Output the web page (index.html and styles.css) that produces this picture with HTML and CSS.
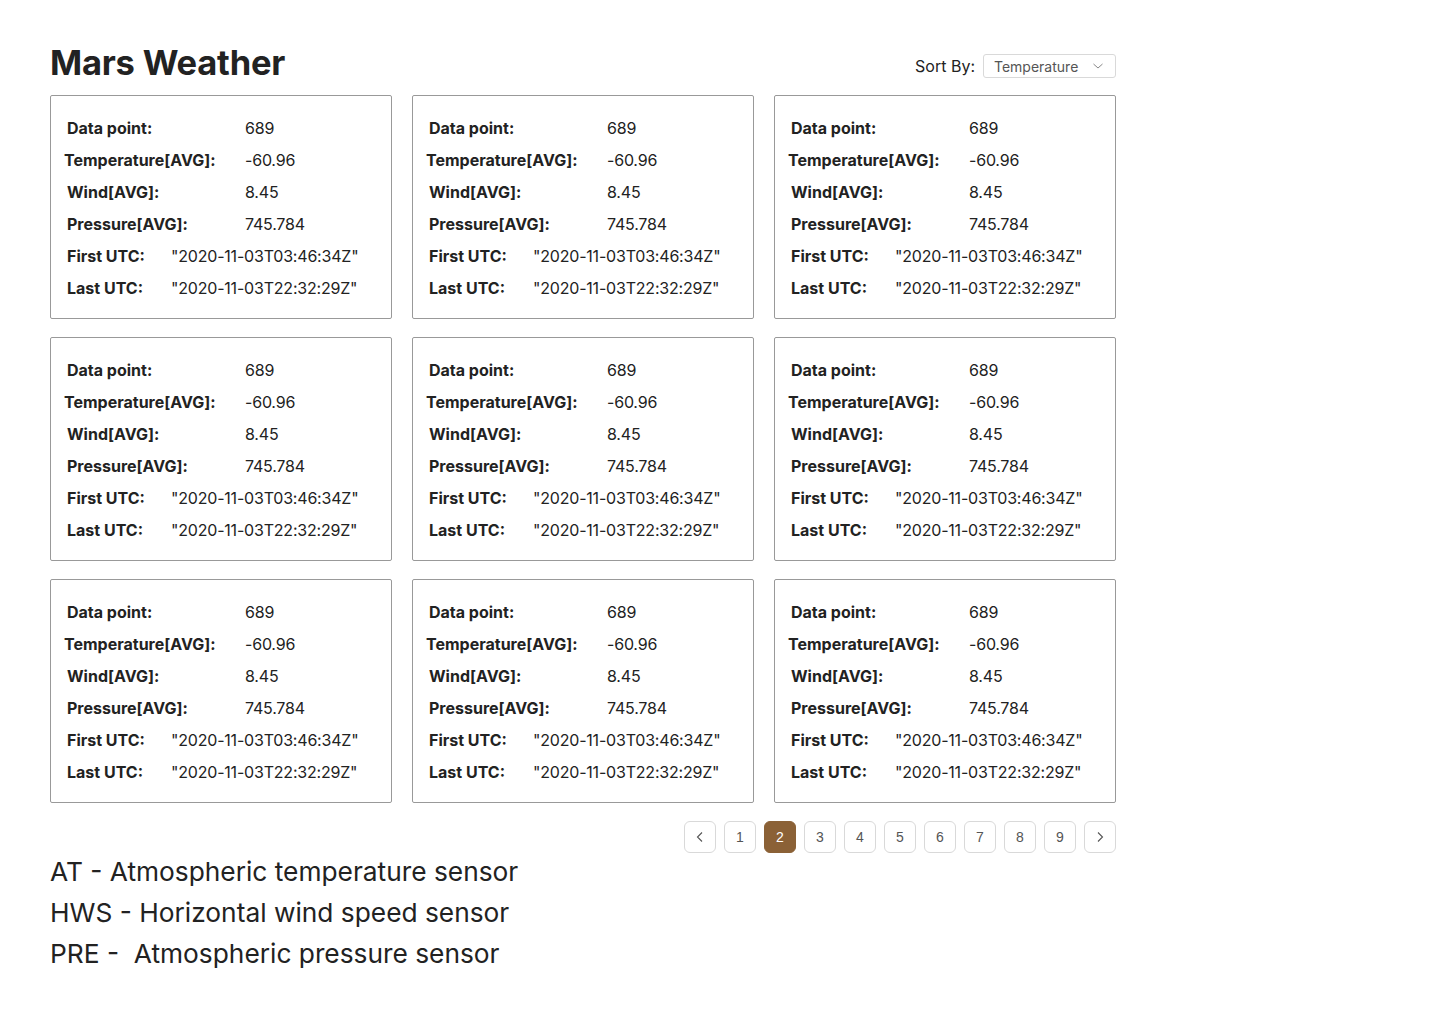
FILE: index.html
```html
<!DOCTYPE html>
<html>
<head>
<meta charset="utf-8">
<link rel="stylesheet" href="styles.css">
</head>
<body>
<div class="page">
  <header class="header">
    <h1 class="title">Mars Weather</h1>
    <div class="sort">
      <span class="sort-label">Sort By:</span>
      <div class="select">
        <span>Temperature</span>
        <svg width="12" height="12" viewBox="0 0 12 12"><path d="M1.5 4 L6 8 L10.5 4" fill="none" stroke="#888" stroke-width="1"/></svg>
      </div>
    </div>
  </header>
  <main class="grid" id="grid"></main>
  <nav class="pager">
    <button class="pg"><svg width="14" height="14" viewBox="0 0 14 14"><path d="M9 2.5 L4.5 7 L9 11.5" fill="none" stroke="#555" stroke-width="1.1"/></svg></button>
    <button class="pg">1</button>
    <button class="pg active">2</button>
    <button class="pg">3</button>
    <button class="pg">4</button>
    <button class="pg">5</button>
    <button class="pg">6</button>
    <button class="pg">7</button>
    <button class="pg">8</button>
    <button class="pg">9</button>
    <button class="pg"><svg width="14" height="14" viewBox="0 0 14 14"><path d="M5 2.5 L9.5 7 L5 11.5" fill="none" stroke="#555" stroke-width="1.1"/></svg></button>
  </nav>
  <section class="legend">
    <p>AT - Atmospheric temperature sensor</p>
    <p>HWS - Horizontal wind speed sensor</p>
    <p>PRE - &nbsp;Atmospheric pressure sensor</p>
  </section>
</div>
<template id="card">
  <div class="card">
    <div class="row"><span class="lbl">Data point:</span><span class="val">689</span></div>
    <div class="row"><span class="lbl lbl-wide">Temperature[AVG]:</span><span class="val">-60.96</span></div>
    <div class="row"><span class="lbl">Wind[AVG]:</span><span class="val">8.45</span></div>
    <div class="row"><span class="lbl">Pressure[AVG]:</span><span class="val">745.784</span></div>
    <div class="row utc"><span class="lbl">First UTC:</span><span class="val">"2020-11-03T03:46:34Z"</span></div>
    <div class="row utc"><span class="lbl">Last UTC:</span><span class="val">"2020-11-03T22:32:29Z"</span></div>
  </div>
</template>
<script>
  const g = document.getElementById('grid');
  const t = document.getElementById('card');
  for (let i = 0; i < 9; i++) g.appendChild(t.content.cloneNode(true));
</script>
</body>
</html>
```
FILE: styles.css
```css
* { box-sizing: border-box; }
body {
  margin: 0;
  font-family: Inter, "Noto Sans", sans-serif;
  color: #222;
  background: #fff;
}
.page {
  width: 1066px;
  margin-left: 50px;
  padding-top: 40px;
}
.header {
  display: flex;
  justify-content: space-between;
  align-items: flex-start;
  height: 55px;
}
.title {
  margin: 0;
  font-size: 34.5px;
  font-weight: 700;
  line-height: 45px;
  letter-spacing: -0.2px;
  color: #222;
}
.sort {
  display: flex;
  align-items: center;
  gap: 8px;
  margin-top: 14px;
}
.sort-label {
  font-size: 16px;
  color: #222;
}
.select {
  width: 133px;
  height: 24px;
  border: 1px solid #d9d9d9;
  border-radius: 3px;
  display: flex;
  align-items: center;
  justify-content: space-between;
  padding: 0 11px 0 10px;
  font-size: 14px;
  color: #555;
}
.grid {
  display: grid;
  grid-template-columns: repeat(3, 342px);
  column-gap: 20px;
  row-gap: 18px;
}
.card {
  height: 224px;
  border: 1px solid #999;
  border-radius: 2px;
  padding: 16px 0 0 16px;
}
.row {
  display: flex;
  height: 32px;
  align-items: center;
  font-size: 16px;
}
.lbl {
  font-weight: 700;
  width: 178px;
  color: #222;
}
.lbl-wide { margin-left: -3px; width: 181px; }
.val { color: #222; letter-spacing: -0.2px; }
.utc .lbl { width: 104px; }
.pager {
  display: flex;
  justify-content: flex-end;
  gap: 8px;
  margin-top: 18px;
}
.pg {
  width: 32px;
  height: 32px;
  border: 1px solid #d9d9d9;
  border-radius: 6px;
  background: #fff;
  font-family: "Liberation Sans", Arial, sans-serif;
  font-size: 14px;
  color: #555;
  display: flex;
  align-items: center;
  justify-content: center;
  padding: 0;
}
.pg.active {
  background: #8b6136;
  border-color: #8b6136;
  color: #fff;
}
.legend {
  margin-top: -2px;
}
.legend p {
  margin: 0;
  font-size: 26.3px;
  line-height: 41px;
  color: #222;
}
```
